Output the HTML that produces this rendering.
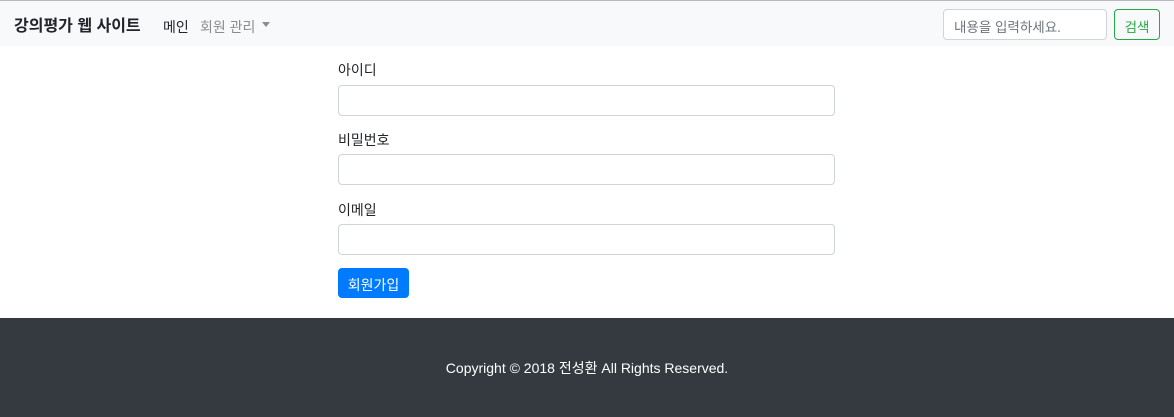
<!DOCTYPE html>
<html><head><meta charset="utf-8"><style>
*{box-sizing:border-box;margin:0;padding:0}
body{width:1174px;height:417px;overflow:hidden;background:#fff;font-family:"Liberation Sans","Noto Sans CJK KR",sans-serif;font-size:14px;color:#212529;position:relative}
.nav{position:absolute;left:0;top:0;width:1174px;height:46px;background:#f8f9fa;border-top:1px solid #b8b8bc}
.brand{position:absolute;left:14px;top:11px;font-size:16px;font-weight:bold;color:#212529}
.l1{position:absolute;left:163px;top:16px;color:#212529}
.l2{position:absolute;left:200px;top:16px;color:#8a8d90}
.caret{position:absolute;left:262px;top:21px;border-left:4px solid transparent;border-right:4px solid transparent;border-top:5px solid #8a8d90}
.sin{position:absolute;left:943px;top:8px;width:164px;height:31px;border:1px solid #ced4da;border-radius:4px;background:#fff;color:#6c757d;padding:6px 0 0 10px;font-size:13.5px}
.sbtn{position:absolute;left:1114px;top:8px;width:46px;height:31px;border:1px solid #28a745;border-radius:4px;color:#28a745;text-align:center;padding-top:6px;font-size:13.5px}
.lab{position:absolute;left:338px}
.inp{position:absolute;left:338px;width:497px;height:31px;border:1px solid #ced4da;border-radius:4px;background:#fff}
.btn{position:absolute;left:338px;top:268px;width:71px;height:30px;background:#007bff;border-radius:4px;color:#fff;text-align:center;padding-top:7px}
.foot{position:absolute;left:0;top:318px;width:1174px;height:99px;background:#343a40;color:#fff;text-align:center;padding-top:40px}
</style></head><body>
<div class="nav">
<div class="brand">강의평가 웹 사이트</div>
<div class="l1">메인</div><div class="l2">회원 관리</div><div class="caret"></div>
<div class="sin">내용을 입력하세요.</div><div class="sbtn">검색</div>
</div>
<div class="lab" style="top:60px">아이디</div><div class="inp" style="top:85px"></div>
<div class="lab" style="top:130px">비밀번호</div><div class="inp" style="top:154px"></div>
<div class="lab" style="top:200px">이메일</div><div class="inp" style="top:224px"></div>
<div class="btn">회원가입</div>
<div class="foot">Copyright © 2018 전성환 All Rights Reserved.</div>
</body></html>
